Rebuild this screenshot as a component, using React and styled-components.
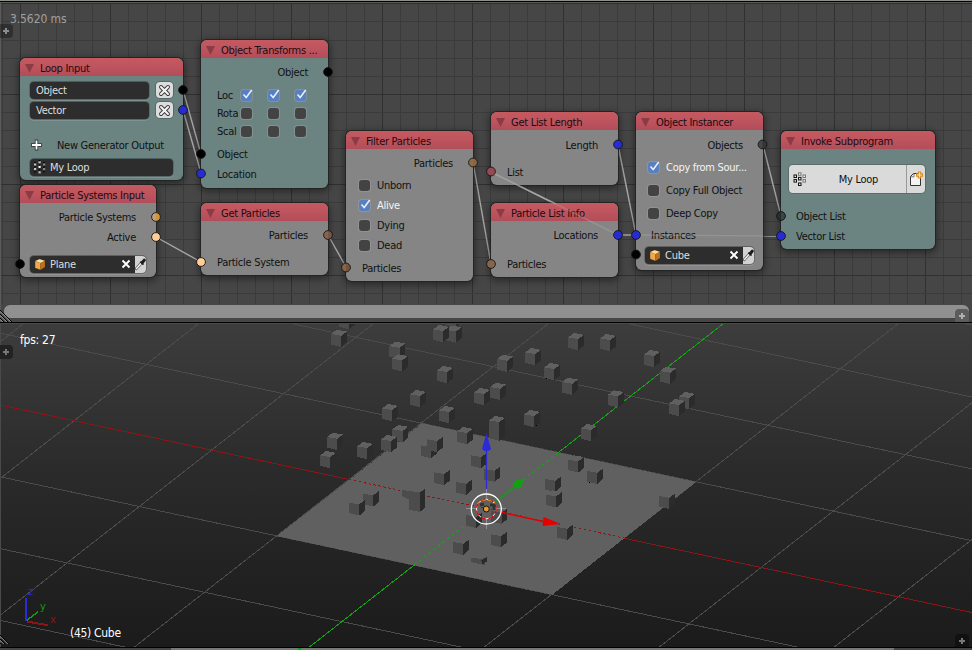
import React from "react";
import styled, { createGlobalStyle, css } from "styled-components";

const Global = createGlobalStyle`
  * { box-sizing: border-box; }
  body { margin: 0; background: #000; overflow: hidden; }
`;

const Screen = styled.div`
  width: 972px;
  height: 650px;
  display: flex;
  flex-direction: column;
  overflow: hidden;
  font: 11px/16px "DejaVu Sans Condensed", "DejaVu Sans", sans-serif;
  font-stretch: condensed;
  letter-spacing: -0.28px;
  color: #111;
`;

const NodeEditor = styled.section`
  position: relative;
  flex: 0 0 322px;
  overflow: hidden;
  background: #464646;
  display: flex;
  flex-direction: column;
  justify-content: flex-end;
`;

const Layer = styled.svg`
  position: absolute;
  left: 0;
  top: 0;
  pointer-events: none;
`;

const Overlay = styled.span`
  position: absolute;
  left: ${(p) => p.$x}px;
  top: ${(p) => p.$y}px;
  white-space: pre;
  color: ${(p) => p.$color};
  font-size: ${(p) => p.$size || 12}px;
  letter-spacing: ${(p) => p.$spacing ?? 0}px;
`;

const EdgeTab = styled.span`
  position: absolute;
  left: ${(p) => p.$x}px;
  top: ${(p) => p.$y}px;
  width: 14px;
  height: 14px;
  display: grid;
  place-items: center;
  border-radius: ${(p) => (p.$bottom ? "4px 4px 0 0" : "0 4px 4px 0")};
  background: ${(p) => p.$bg || "rgba(0,0,0,.33)"};
`;

const Scrollbar = styled.div`
  position: relative;
  height: 13px;
  margin: 0 3px 4px 4px;
  border-radius: 6px;
  background: #909090;
`;

const bodyColor = { teal: "rgba(108,134,132,.96)", gray: "rgba(135,135,135,.96)" };

const NodeBox = styled.article`
  position: absolute;
  left: ${(p) => p.$x}px;
  top: ${(p) => p.$y}px;
  width: ${(p) => p.$w}px;
  height: ${(p) => p.$h}px;
  border-radius: 6px;
  overflow: hidden;
  background: ${(p) => bodyColor[p.$tone]};
  box-shadow: 0 0 0 1px #242424, 0 2px 7px 2px rgba(0, 0, 0, 0.4);
`;

const Header = styled.header`
  height: 18px;
  display: flex;
  align-items: center;
  gap: 6px;
  padding: 3px 0 0 5px;
  color: #1c0c0e;
  white-space: pre;
  background: linear-gradient(#c5595f, #bd545e 50%, #b24d59);
`;

const Row = styled.div`
  height: ${(p) => p.$h || 16}px;
  margin-top: ${(p) => p.$gap}px;
  padding: 0 ${(p) => p.$right || 0}px 0 ${(p) => p.$left || 0}px;
  display: flex;
  align-items: center;
  justify-content: ${(p) => (p.$end ? "flex-end" : "flex-start")};
  white-space: pre;
`;

const Text = styled.span`
  line-height: 16px;
  padding-top: 1px;
  ${(p) => p.$light && css`color: #f4f4f4;`}
  ${(p) => p.$basis && css`flex: 0 0 ${p.$basis}px;`}
  ${(p) => p.$center && css`flex: 1; text-align: center; padding-left: 4px;`}
`;

const Field = styled.div`
  width: ${(p) => p.$w}px;
  height: 17px;
  display: flex;
  align-items: center;
  gap: ${(p) => p.$gap || 0}px;
  padding-left: ${(p) => p.$pad || 6}px;
  overflow: hidden;
  border-radius: 4px;
  background: #2d2d2d;
  box-shadow: 0 0 0 1px rgba(0, 0, 0, 0.28), 0 1px 0 1px rgba(255, 255, 255, 0.12);
  color: #dedede;
`;

const Grow = styled.span`
  flex: 1;
  padding-top: 1px;
`;

const RemoveButton = styled.button`
  width: 17px;
  height: 16px;
  margin-left: 7px;
  padding: 0;
  border: 0;
  border-radius: 4px;
  display: grid;
  place-items: center;
  background: #dcdcdc;
  box-shadow: 0 0 0 1px rgba(0, 0, 0, 0.2);
`;

const Box = styled.span`
  flex: none;
  width: 11px;
  height: 11px;
  margin-right: ${(p) => p.$after ?? 7}px;
  border-radius: 3px;
  background: ${(p) => (p.$on ? "#5680c2" : "#434343")};
  box-shadow: 0 0 0 1px rgba(170, 170, 170, 0.38);
  display: grid;
`;

const SubprogramButton = styled.div`
  width: 136px;
  height: 28px;
  display: flex;
  align-items: center;
  padding-left: 4px;
  border-radius: 4px;
  background: #dadada;
  box-shadow: 0 0 0 1px rgba(60, 70, 70, 0.35);
`;

const NewFile = styled.span`
  width: 19px;
  height: 28px;
  border-left: 1px solid #999;
  display: grid;
  place-items: center;
`;

const Viewport = styled.section`
  position: relative;
  flex: 0 0 325px;
  overflow: hidden;
  background: linear-gradient(#3d3d3d, #2b2b2b 45%, #1b1b1b);
`;

const Timeline = styled.footer`
  height: 3px;
  display: flex;
  border-top: 1px solid #000;
  background: #444;
`;

const TimelinePart = styled.span`
  width: ${(p) => p.$w}px;
  background: ${(p) => p.$bg};
`;

const Plus = ({ color = "#8c8c8c" }) => (
  <svg width="8" height="8" viewBox="0 0 8 8" shapeRendering="crispEdges">
    <path d="M1 4h6M4 1v6" stroke={color} strokeWidth="2" />
  </svg>
);

const Check = () => (
  <svg width="13" height="12" viewBox="0 0 13 12" overflow="visible">
    <path d="M2.5 4.5l2.7 3L10.7 0" fill="none" stroke="#e9eef8" strokeWidth="1.6" />
  </svg>
);

const Triangle = () => (
  <svg width="9" height="10" viewBox="0 0 9 10">
    <path d="M0 0h9L4.5 9z" fill="#8b3b43" />
  </svg>
);

const CrossOutline = () => (
  <svg width="13" height="13" viewBox="0 0 13 13">
    <path d="M3 3l7 7M10 3l-7 7" stroke="#3a3a3a" strokeWidth="3.9" strokeLinecap="round" />
    <path d="M3 3l7 7M10 3l-7 7" stroke="#f4f4f4" strokeWidth="2.1" strokeLinecap="round" />
  </svg>
);

const CubeIcon = () => (
  <svg width="12" height="13" viewBox="0 0 12 13">
    <path d="M1 3l4.5-2L11 2.7V9L6.5 12 1 10z" fill="#9a5c18" />
    <path d="M1.3 3.1l4.3-1.8 5 1.5-4.2 2.1z" fill="#fbdda6" />
    <path d="M1.3 3.4l4.8 1.7v6.4L1.3 9.7z" fill="#eba952" />
    <path d="M6.7 5.1l4-2v5.7l-4 2.7z" fill="#bc7221" />
  </svg>
);

const Clear = () => (
  <svg width="10" height="10" viewBox="0 0 10 10">
    <path d="M1.5 1.5l7 7M8.5 1.5l-7 7" stroke="#fff" strokeWidth="1.9" />
  </svg>
);

const DropperBox = styled.span`
  width: 11px;
  height: 17px;
  background: #d2d2d2;
  display: grid;
  place-items: center;
`;

const Dropper = () => (
  <DropperBox>
    <svg width="11" height="14" viewBox="0 0 11 14">
      <path d="M1.2 11.8L6.6 5.8" stroke="#666" strokeWidth="2.8" strokeLinecap="round" />
      <path d="M1.5 11.5L6.4 6" stroke="#f7f7f7" strokeWidth="1.3" strokeLinecap="round" />
      <path d="M5.3 4.6l3.2 3" stroke="#1c1c1c" strokeWidth="1.5" />
      <path d="M7.3 5.4L9.2 3.2" stroke="#1c1c1c" strokeWidth="3" strokeLinecap="round" />
    </svg>
  </DropperBox>
);

const squares = [
  [1, 3], [1, 7.6], [5.5, 0.8], [5.5, 5.4], [5.5, 11], [10, 3], [10, 7.6],
];
const LoopIcon = ({ dark }) => (
  <svg width="14" height="15" viewBox="0 0 14 15">
    {squares.map(([x, y], i) =>
      dark ? (
        <rect key={i} x={x} y={y + 0.3} width="2.2" height="2.2" fill={i === 3 ? "#fff" : i > 4 ? "#888" : "#c4c4c4"} />
      ) : (
        <rect key={i} x={x} y={y} width="2.5" height="2.5" fill="#eee" stroke={i > 4 || i === 2 ? "#777" : "#111"} />
      )
    )}
    {dark && <path d="M2 2v11M6.5 0v14M11 2v11" stroke="#000" strokeWidth="1.6" strokeDasharray="1.2 3.4" />}
  </svg>
);

const FileIcon = () => (
  <svg width="15" height="16" viewBox="0 0 15 16">
    <path d="M1.5 5.5L4.5 2.5h7v12h-10z" fill="#f3f3f3" stroke="#333" />
    <path d="M2 5.8h3V3" fill="none" stroke="#777" />
    <path d="M7 4h7M10.5 .5v7" stroke="#d98c22" strokeWidth="3.4" />
    <path d="M8 4h5M10.5 1.5v5" stroke="#ffe0ad" strokeWidth="1.2" />
  </svg>
);

const Node = ({ title, x, y, w, h, tone = "gray", children }) => (
  <NodeBox $x={x} $y={y} $w={w} $h={h} $tone={tone}>
    <Header>
      <Triangle />
      <Text>{title}</Text>
    </Header>
    {children}
  </NodeBox>
);

const Output = ({ gap, children }) => (
  <Row $gap={gap} $end $right={20}>
    <Text>{children}</Text>
  </Row>
);
const Input = ({ gap, left = 16, children }) => (
  <Row $gap={gap} $left={left}>
    <Text>{children}</Text>
  </Row>
);
const Option = ({ gap, on, left = 13, children }) => (
  <Row $gap={gap} $left={left}>
    <Box $on={on}>{on && <Check />}</Box>
    <Text $light={on}>{children}</Text>
  </Row>
);
const Axes = ({ gap, label, on }) => (
  <Row $gap={gap} $left={16}>
    <Text $basis={23.5}>{label}</Text>
    {[0, 1, 2].map((i) => (
      <Box key={i} $on={on} $after={16}>{on && <Check />}</Box>
    ))}
  </Row>
);
const ObjectField = ({ gap, children, w, left }) => (
  <Row $gap={gap} $left={left}>
    <Field $w={w} $pad={4} $gap={4}>
      <CubeIcon />
      <Grow>{children}</Grow>
      <Clear />
      <Dropper />
    </Field>
  </Row>
);

/* Node-editor backdrop: 18.1px cells with a darker line every fifth one. */
const Backdrop = () => {
  const lines = [];
  for (let i = -1; i < 54; i++) {
    const x = Math.floor(20.3 + i * 18.1) + 0.5;
    lines.push(<path key={"v" + i} d={`M${x} 4V304`} stroke={i % 5 === 0 ? "#303030" : "#3b3b3b"} />);
  }
  for (let j = 0; j < 17; j++) {
    const y = Math.floor(3.8 + j * 18.1) + 0.5;
    lines.push(<path key={"h" + j} d={`M0 ${y}H972`} stroke={j % 5 === 0 ? "#303030" : "#3b3b3b"} />);
  }
  return (
    <Layer width="972" height="322" shapeRendering="crispEdges">
      {lines}
      <path d="M0 .5H972" stroke="#8b9189" />
      <path d="M0 1.5H972" stroke="#000" />
      <path d="M0 2.5H972" stroke="#5a5a5a" />
      <path d="M.5 3V322" stroke="#5a5a5a" />
    </Layer>
  );
};

const links = [
  [183, 90, 201, 154], [183, 110, 201, 173], [156, 237, 201, 262], [328, 235, 346, 267],
  [473, 162, 491, 264], [618, 145, 636, 235], [618, 235, 636, 235], [763, 145, 781, 216],
  [491, 172, 618, 235], [636, 235, 781, 236],
];
const overLinks = [
  [491, 172, 556, 204, 0.75], [556, 204, 618, 235, 0.35], [636, 235, 781, 236, 0.35],
];
const Links = ({ items }) => (
  <Layer width="972" height="322">
    {items.map(([a, b, c, d, o = 1], i) => (
      <path key={i} d={`M${a} ${b}L${c} ${d}`} stroke="#a8a8a8" strokeWidth="1.4" opacity={o} />
    ))}
  </Layer>
);

const blue = "#262bd2";
const peach = "#ffcd98";
const brown = "#85664d";
const sockets = [
  [183, 90, "#000"], [183, 110, blue], [328, 72, "#000"], [201, 154, "#000"], [201, 173.5, blue],
  [156, 217, "#c3a07a", "#cf9638"], [156, 237, peach], [20, 264, "#000"], [328, 235, brown, "#765746"],
  [201, 262, peach], [473, 162.5, "#8e6d45", brown], [346, 267.5, brown, "#795338"], [618, 144.5, blue],
  [491, 171.5, "#954b51"], [618, 235, blue], [491, 264, brown], [762.5, 144.5, "#474747", "#353535"],
  [636, 235, blue], [636, 254.5, "#000"], [781, 216, "#292c2c", "#3a4544"], [781, 236, blue],
];
const Sockets = () => (
  <Layer width="972" height="322">
    {sockets.map(([x, y, c, right], i) => (
      <g key={i}>
        <circle cx={x} cy={y} r="4.4" fill={c} />
        {right && <path d={`M${x} ${y - 4.4}a4.4 4.4 0 0 1 0 8.8z`} fill={right} />}
        <circle cx={x} cy={y} r="4.4" fill="none" stroke="#151515" strokeWidth=".9" />
      </g>
    ))}
  </Layer>
);

const Grip = ({ y }) => (
  <Layer width="14" height="322">
    {[0, 4, 8].map((d) => (
      <g key={d}>
        <path d={`M0 ${y + d}l${12 - d} ${12 - d}`} stroke="#000" />
        <path d={`M0 ${y + 1.3 + d}l${11 - d} ${11 - d}`} stroke="#b0b0b0" strokeWidth=".9" />
      </g>
    ))}
  </Layer>
);

const cubes = [
  [339, 312], [331, 329.7], [446, 310], [445.7, 325.5], [433, 325], [389.3, 341.7], [392, 354.3],
  [437, 366], [497, 354.7], [410, 390], [490, 382.7], [474, 388], [382, 404], [439, 406],
  [392.3, 425], [381, 435], [327, 432.7], [357, 442], [320, 451], [457, 427], [421, 441], [427, 435],
  [471, 451], [484.3, 464.7], [434, 468], [456, 477.7], [363, 489.3], [349, 498.3],
  [466, 510.7], [491.3, 506.7], [453, 537.7], [491, 530], [568, 333], [600, 334], [644, 350],
  [660, 366.7], [525, 348], [544, 363], [562, 377.7], [608, 390.3], [679, 392], [669, 399],
  [524, 410], [581, 424], [568, 455.3], [587, 466.7], [545, 474.7], [546, 490.3], [659, 491.7],
  [557, 522.7],
];

const Cube = ({ x, y, h = 10.5 }) => (
  <g transform={`translate(${x} ${y})`}>
    <path d="M0 4.3L6 0 16 1.8 10.3 6z" fill="#606060" />
    <path d={`M0 4.3L10.3 6v${h + 0.8}L0 ${4.3 + h}z`} fill="#4c4c4c" />
    <path d={`M10.3 6L16 1.8v${h}L10.3 ${6.8 + h}z`} fill="#2b2b2b" />
  </g>
);

const O = [486.3, 508.8];
const A = [137.4, 29.35];
const B = [72.2, -56.4];
const through = (u, i, v, n) => {
  const p = [O[0] + u[0] * i, O[1] + u[1] * i];
  return `M${p[0] - v[0] * n} ${p[1] - v[1] * n}L${p[0] + v[0] * n} ${p[1] + v[1] * n}`;
};

const Scene = () => (
  <Layer width="972" height="325" viewBox="0 322 972 325" shapeRendering="crispEdges">
    <g fill="none" stroke="#4b4b4b">
      {[-3, -2, -1, 1, 2, 3, 4].map((i) => <path key={"r" + i} d={through(B, i, A, 8)} />)}
      {[-5, -4, -3, -2, -1, 1, 2, 3, 4].map((i) => <path key={"c" + i} d={through(A, i, B, 8)} />)}
      <path d={through(B, 0, A, 8)} stroke="#8c1518" />
      <path d={through(A, 0, B, 8)} stroke="#15a015" />
    </g>
    <path d="M277 536L422 423.3 696 482 552.5 594.6z" fill="#606060" />
    <path d="M349 479.5L624 538" stroke="#8c1518" strokeDasharray="2.5 2.5" />
    <path d="M414 565L558.5 452.5" stroke="#15a015" strokeDasharray="3 3" />
    {cubes.map(([x, y], i) => <Cube key={i} x={x} y={y} />)}
    <Cube x={489} y={416} h={18} />
    <path d="M402 490l18 2.5v6l-11 1-7-3.3z" fill="#4c4c4c" />
    <path d="M409 494l11 1.5v16.3l-11-2z" fill="#4c4c4c" />
    <path d="M420 492.5l4.8-3.5v18.8l-4.8 4z" fill="#2b2b2b" />
    <path d="M471 558l5-.3 4 1.4 5-1v7.2l-14-3.3z" fill="#4c4c4c" />
    <path d="M481.5 560.5l5.2-3.5v4.4l-5.2 3.8z" fill="#2b2b2b" />
    <path d="M546 378h1v1h-1zM536 425h1v1h-1zM589 482h1v1h-1z" fill="#000" />
    <g shapeRendering="geometricPrecision" fill="none">
      <path d="M466 508.5h11M495 508.5h11M486.5 489v10M486.5 518v11" stroke="#8d8d8d" />
      <path d="M499 499l18-14" stroke="#12a012" strokeWidth="1.3" />
      <path d="M512.5 484l4-4 8-1-4 8.5-3.5 1.5z" fill="#12a012" />
      <path d="M500 512l43 9.5" stroke="#e50000" strokeWidth="1.4" />
      <path d="M543.5 517l17.5 7-18.5 2z" fill="#e50000" />
      <path d="M486.5 449v40" stroke="#2b2bd8" strokeWidth="1.3" />
      <path d="M486.5 433l4.5 16-2.5 2h-4l-2.5-2z" fill="#2b2bd8" />
      <circle cx="486.3" cy="509" r="15" stroke="#fff" strokeWidth="1.3" />
      <circle cx="486.3" cy="509" r="9.8" stroke="#eee" strokeWidth="1" />
      <circle cx="486.3" cy="509" r="9.8" stroke="#e00000" strokeWidth="1.3" strokeDasharray="5 3" />
      <path d="M477 504l5-4 12 1 2 5" stroke="#dc8a20" strokeWidth="1" strokeDasharray="4 2" />
      <path d="M480 505l4-1M490 505h4v5" stroke="#333" strokeWidth="3" />
      <circle cx="486.3" cy="509" r="3" fill="#e09a3d" stroke="#1c1206" strokeWidth="1" />
    </g>
    <path d="M26 598v23" stroke="#2b2bd8" strokeWidth="2" />
    <path d="M27 620l11-8" stroke="#159c15" strokeWidth="1.5" />
    <path d="M27 621.5l21 3.8" stroke="#8c1518" strokeWidth="2" />
    <path d="M0 323.5H972" stroke="#4a4a4a" />
    <path d="M0 322.5H972" stroke="#000" />
    <path d="M.5 323V647" stroke="#4a4a4a" />
  </Layer>
);

export default function App() {
  return (
    <Screen>
      <Global />
      <NodeEditor>
        <Backdrop />
        <Overlay $x={10} $y={11} $color="#a0a0a0" $spacing={-0.1}>3.5620 ms</Overlay>
        <Links items={links} />

        <Node title="Loop Input" x={20} y={58} w={163} h={122} tone="teal">
          {["Object", "Vector"].map((name, i) => (
            <Row key={name} $gap={i ? 4 : 6} $left={10}>
              <Field $w={119}><Grow>{name}</Grow></Field>
              <RemoveButton><CrossOutline /></RemoveButton>
            </Row>
          ))}
          <Row $gap={19} $left={11}>
            <svg width="26" height="12" viewBox="0 0 26 12">
              <path d="M5.5 .5v11M0 6h11" stroke="#333" strokeWidth="3.4" />
              <path d="M5.5 1.4v9.2M.9 6h9.2" stroke="#fff" strokeWidth="1.8" />
            </svg>
            <Text>New Generator Output</Text>
          </Row>
          <Row $gap={6} $left={10}>
            <Field $w={143} $pad={3} $gap={3}>
              <LoopIcon dark />
              <Grow>My Loop</Grow>
            </Field>
          </Row>
        </Node>

        <Node title="Object Transforms ..." x={201} y={40} w={127} h={148} tone="teal">
          <Output gap={6}>Object</Output>
          <Axes gap={7} label="Loc" on />
          <Axes gap={2} label="Rota" />
          <Axes gap={2} label="Scal" />
          <Input gap={7}>Object</Input>
          <Input gap={4}>Location</Input>
        </Node>

        <Node title="Particle Systems Input" x={20} y={185} w={136} h={92}>
          <Output gap={6}>Particle Systems</Output>
          <Output gap={4}>Active</Output>
          <ObjectField gap={11} left={10} w={116}>Plane</ObjectField>
        </Node>

        <Node title="Get Particles" x={201} y={203} w={127} h={72}>
          <Output gap={6}>Particles</Output>
          <Input gap={11}>Particle System</Input>
        </Node>

        <Node title="Filter Particles" x={346} y={131} w={127} h={150}>
          <Output gap={6}>Particles</Output>
          <Option gap={6}>Unborn</Option>
          <Option gap={4} on>Alive</Option>
          <Option gap={4}>Dying</Option>
          <Option gap={4}>Dead</Option>
          <Input gap={7}>Particles</Input>
        </Node>

        <Node title="Get List Length" x={491} y={112} w={127} h={73}>
          <Output gap={7}>Length</Output>
          <Input gap={11}>List</Input>
        </Node>

        <Node title="Particle List Info" x={491} y={203} w={127} h={74}>
          <Output gap={6}>Locations</Output>
          <Input gap={13}>Particles</Input>
        </Node>

        <Node title="Object Instancer" x={636} y={112} w={127} h={158}>
          <Output gap={7}>Objects</Output>
          <Option gap={6} left={12} on>Copy from Sour...</Option>
          <Option gap={7} left={12}>Copy Full Object</Option>
          <Option gap={7} left={12}>Deep Copy</Option>
          <Input gap={6} left={15}>Instances</Input>
          <ObjectField gap={4} left={9} w={109}>Cube</ObjectField>
        </Node>

        <Node title="Invoke Subprogram" x={781} y={131} w={154} h={118} tone="teal">
          <Row $gap={16} $h={28} $left={8}>
            <SubprogramButton>
              <LoopIcon />
              <Text $center>My Loop</Text>
              <NewFile><FileIcon /></NewFile>
            </SubprogramButton>
          </Row>
          <Input gap={15} left={15}>Object List</Input>
          <Input gap={4} left={15}>Vector List</Input>
        </Node>

        <Links items={overLinks} />
        <Sockets />
        <EdgeTab $x={-1} $y={24}><Plus /></EdgeTab>
        <Scrollbar />
        <EdgeTab $x={955} $y={309} $bottom $bg="#5c5c5c"><Plus color="#b0b0b0" /></EdgeTab>
        <Grip y={310} />
      </NodeEditor>

      <Viewport>
        <Scene />
        <Overlay $x={20} $y={10} $color="#fff" $spacing={-0.25}>fps: 27</Overlay>
        <Overlay $x={70} $y={303} $color="#fff" $spacing={-0.3}>(45) Cube</Overlay>
        <Overlay $x={28} $y={262} $size={11} $color="#2b2bd8">z</Overlay>
        <Overlay $x={40} $y={277} $size={11} $color="#159c15">y</Overlay>
        <Overlay $x={50} $y={290} $size={11} $color="#8c1518">x</Overlay>
        <EdgeTab $x={-1} $y={23} $bg="#222"><Plus color="#777" /></EdgeTab>
        <EdgeTab $x={955} $y={312} $bottom $bg="#111"><Plus color="#777" /></EdgeTab>
        <Grip y={313} />
      </Viewport>

      <Timeline>
        <TimelinePart $w={171} $bg="#454545" />
        <TimelinePart $w={127} $bg="#777" />
        <TimelinePart $w={3} $bg="#10a010" />
        <TimelinePart $w={593} $bg="#777" />
      </Timeline>
    </Screen>
  );
}
